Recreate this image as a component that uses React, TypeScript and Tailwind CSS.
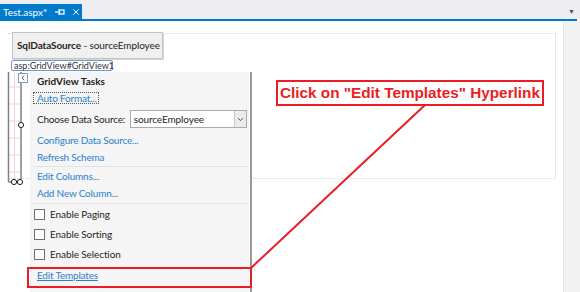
import React from "react";
import { ChevronDown, ChevronLeft, X } from "lucide-react";

const ui = { fontFamily: 'Lato, "Noto Sans", sans-serif' };

const LinkRow = ({ label, h }: { label: string; h: string }) => (
  <div className={`flex items-center whitespace-nowrap pl-[4px] ${h}`}>
    <span className="text-[10px] tracking-[-0.2px] text-[#2a7fd0]">{label}</span>
  </div>
);

const CheckRow = ({ label, h }: { label: string; h: string }) => (
  <div className={`flex items-center gap-[5px] whitespace-nowrap pl-[1px] ${h}`}>
    <span className="h-[11px] w-[11px] border border-[#707070] bg-white" />
    <span className="text-[10px] tracking-[-0.1px] text-[#1e1e1e]">{label}</span>
  </div>
);

function GridSkeleton() {
  return (
    <div className="relative h-[120px] w-[30px] shrink-0">
      <svg width="30" height="120" className="absolute left-0 top-0">
        {[16, 33, 50, 67, 84, 101].map((y) => (
          <line key={y} x1="9" y1={y} x2="20" y2={y} stroke="#f2d4d4" />
        ))}
        <line x1="14.5" y1="2" x2="14.5" y2="108" stroke="#f2d4d4" />
        <line x1="8.5" y1="1" x2="8.5" y2="111" stroke="#808080" strokeWidth="1.5" />
        <line x1="21" y1="1" x2="21" y2="108" stroke="#808080" strokeWidth="1.5" />
        <line x1="8.5" y1="111" x2="11" y2="111" stroke="#808080" strokeWidth="1.5" />
        <circle cx="21" cy="54" r="2.6" fill="white" stroke="#202020" />
        <circle cx="14" cy="111" r="2.6" fill="white" stroke="#202020" />
        <circle cx="20" cy="111" r="2.6" fill="white" stroke="#202020" />
      </svg>
      <div className="absolute left-[18px] top-[2px] flex h-[10px] w-[10px] items-center justify-center border border-[#7a9cc8] bg-white">
        <ChevronLeft size={8} strokeWidth={2.5} color="#333" />
      </div>
    </div>
  );
}

function TasksPanel() {
  return (
    <div className="mt-[1px] flex h-[220px] w-[222px] flex-col border-r-2 border-[#9a9a9a] bg-[#f5f5f5] pl-[3px] pr-[3px]">
      <div className="flex h-[18px] items-center whitespace-nowrap pl-[4px] text-[10px] font-bold text-[#1e1e1e]">
        GridView Tasks
      </div>
      <div className="mt-[2px] flex h-[12px] w-[66px] items-center whitespace-nowrap border border-dotted border-[#555] pl-[3px]">
        <span className="text-[10px] tracking-[-0.2px] text-[#2a7fd0]">Auto Format...</span>
      </div>
      <div className="mt-[6px] flex h-[18px] items-center whitespace-nowrap pl-[4px]">
        <span className="w-[94px] text-[10px] tracking-[-0.2px] text-[#1e1e1e]">Choose Data Source:</span>
        <div className="flex h-[18px] w-[119px] items-center border border-[#ababab] bg-white">
          <span className="flex-1 pl-[3px] text-[10px] tracking-[-0.1px] text-[#1e1e1e]">sourceEmployee</span>
          <span className="flex h-[16px] w-[12px] items-center justify-center border-l border-[#c8c8c8] bg-[#ececec]">
            <ChevronDown size={9} strokeWidth={2.5} color="#444" />
          </span>
        </div>
      </div>
      <div className="mt-[3px]" />
      <LinkRow label="Configure Data Source..." h="h-[18px]" />
      <LinkRow label="Refresh Schema" h="h-[17px]" />
      <div className="h-px bg-[#e2e2e2]" />
      <LinkRow label="Edit Columns..." h="h-[18px]" />
      <LinkRow label="Add New Column..." h="h-[17px]" />
      <div className="mt-px h-px bg-[#e2e2e2]" />
      <CheckRow label="Enable Paging" h="h-[20px]" />
      <CheckRow label="Enable Sorting" h="h-[20px]" />
      <CheckRow label="Enable Selection" h="h-[21px]" />
      <div className="flex h-[20px] items-center whitespace-nowrap pl-[4px]">
        <span className="text-[10px] tracking-[-0.2px] text-[#2a7fd0] underline">Edit Templates</span>
      </div>
    </div>
  );
}

export default function App() {
  return (
    <div className="relative h-[292px] w-[580px] overflow-hidden bg-white" style={ui}>
      {/* document tab strip */}
      <div className="flex h-[19px] items-end justify-between bg-[#eeeef2]">
        <div className="flex h-[15px] w-[82px] items-center whitespace-nowrap bg-[#007acc] pl-[3px] text-white">
          <span className="text-[10px] leading-none">Test.aspx*</span>
          <svg width="10" height="8" viewBox="0 0 10 8" className="ml-[8px]">
            <line x1="0" y1="4" x2="4" y2="4" stroke="white" strokeWidth="1.2" />
            <line x1="4" y1="1" x2="4" y2="7" stroke="white" strokeWidth="1.2" />
            <rect x="4.6" y="2" width="4.4" height="4" fill="none" stroke="white" strokeWidth="1.2" />
          </svg>
          <X size={10} strokeWidth={2.2} className="ml-[6px]" />
        </div>
        <span className="mb-[4px] mr-[5px] text-[7px] leading-none text-[#555]">▼</span>
      </div>
      <div className="mr-[3px] h-[2px] bg-[#007acc]" />

      <div className="flex h-[271px]">
        <div className="relative flex-1">
          <div className="absolute left-[8px] top-[12px] h-[146px] w-[548px] border-b border-r border-t border-dotted border-[#d4d4d4]" />

          <div className="relative ml-[12px] mt-[11px] flex h-[27px] w-[151px] items-center whitespace-nowrap border border-[#c4c4c4] bg-[#f0f0f0] pl-[4px] shadow-[1px_1px_0_#d8d8d8]">
            <span className="text-[10px] tracking-[-0.1px] text-[#1e1e1e]">
              <b>SqlDataSource</b> - sourceEmployee
            </span>
          </div>

          <div className="relative ml-[11px] mt-[1px] flex h-[11px] w-[102px] items-center whitespace-nowrap rounded-[2px] border border-[#6f97d8] bg-white pl-[2px]">
            <span className="text-[9px] leading-none text-[#333]">asp:GridView#GridView1</span>
          </div>

          <div className="relative flex">
            <GridSkeleton />
            <TasksPanel />
          </div>
        </div>
        <div className="w-[17px] border-l border-[#e4e4e4] bg-[#f2f2f2]" />
      </div>

      {/* annotation */}
      <svg width="580" height="292" className="pointer-events-none absolute left-0 top-0">
        <line x1="251" y1="268" x2="425" y2="105" stroke="#ec1c24" strokeWidth="2" />
        <rect x="28" y="268" width="223" height="19" fill="none" stroke="#ec1c24" strokeWidth="2" />
      </svg>
      <div className="absolute left-[276px] top-[80px] flex h-[26px] w-[268px] items-center justify-center border-2 border-[#ec1c24] bg-white">
        <span
          className="text-[15.3px] font-bold leading-none text-[#ec1c24]"
          style={{ fontFamily: '"Liberation Sans", Arial, sans-serif' }}
        >
          Click on "Edit Templates" Hyperlink
        </span>
      </div>
    </div>
  );
}
